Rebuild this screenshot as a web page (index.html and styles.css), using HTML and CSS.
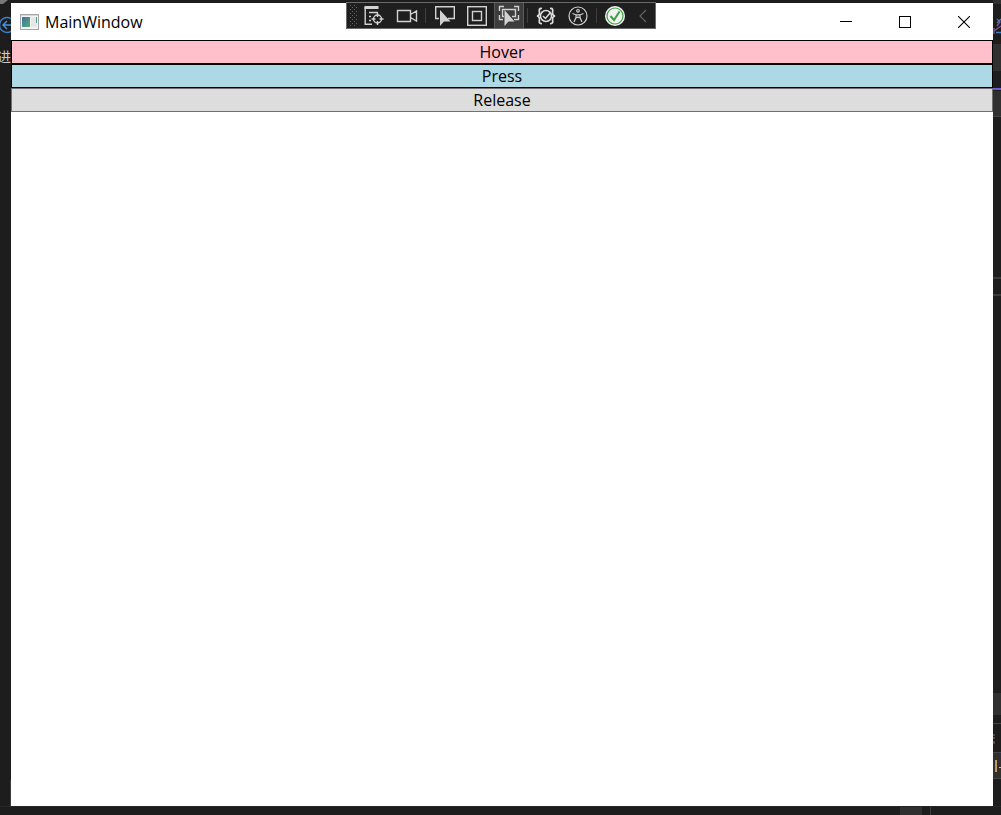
FILE: index.html
```html
<!DOCTYPE html>
<html lang="en">
<head>
<meta charset="utf-8">
<title>MainWindow</title>
<link rel="stylesheet" href="styles.css">
</head>
<body>
<div class="desktop">
  <div class="edge edge-left" aria-hidden="true">
    <svg width="11" height="815" viewBox="0 0 11 815" fill="none">
      <path d="M0 0H8L3 4H0Z" fill="#777"/>
      <circle cx="7" cy="25" r="7.5" stroke="#3f7fc4" stroke-width="1.4"/>
      <path d="M11 25H3M7 21L3 25L7 29" stroke="#4a94e0" stroke-width="1.4"/>
      <path d="M10.500 780V815" stroke="#3d3d3d"/>
    </svg>
    <span class="edge-text">进</span>
  </div>

  <main class="window">
    <header class="titlebar">
      <svg class="app-icon" width="19" height="16" viewBox="0 0 19 16">
        <defs><linearGradient id="pane" x1="0" y1="0" x2="1" y2="1"><stop offset="0" stop-color="#3f6fa5"/><stop offset="1" stop-color="#58ad72"/></linearGradient></defs>
        <rect x=".5" y=".5" width="18" height="15" fill="#f4f4f4" stroke="#a3a7aa"/>
        <path d="M1 1.500H18" stroke="#d5d8da"/>
        <rect x="2" y="3" width="8" height="10" fill="url(#pane)"/>
        <rect x="11" y="3" width="6" height="10" fill="#e4e6e8"/>
        <path d="M16.500 3V9" stroke="#55a184"/>
      </svg>
      <h1 class="title">MainWindow</h1>
      <div class="caption-buttons">
        <button class="caption" aria-label="Minimize"><svg width="12" height="12" viewBox="0 0 12 12"><path d="M0 5.500H12" stroke="#000"/></svg></button>
        <button class="caption" aria-label="Maximize"><svg width="12" height="12" viewBox="0 0 12 12"><rect x=".5" y=".5" width="11" height="11" fill="none" stroke="#000"/></svg></button>
        <button class="caption" aria-label="Close"><svg width="12" height="12" viewBox="0 0 12 12"><path d="M0 0L12 12M12 0L0 12" stroke="#000" stroke-width="1.100"/></svg></button>
      </div>
    </header>
    <div class="stack">
      <button class="bar bar-hover">Hover</button>
      <button class="bar bar-press">Press</button>
      <button class="bar bar-release">Release</button>
    </div>
  </main>

  <div class="edge edge-right" aria-hidden="true">
    <svg width="8" height="815" viewBox="0 0 8 815" fill="none">
      <path d="M0 0H8V4H0ZM0 44H8V71H0ZM0 91H8V116H0ZM0 693H8V715H0ZM0 752H8V779H0Z" fill="#303030"/>
      <path d="M0 116.500H8M0 278H8M0 295H8M0 723.500H8M0 752.500H8M0 778.500H8" stroke="#454545"/>
      <path d="M0 278H8M0 295H8" stroke="#3a3a3a" stroke-width="2"/>
      <path d="M0 89H8" stroke="#6d5bd0" stroke-width="2"/>
      <path d="M4 19L7 22L4 26M1 28V34M1 31L8 26" stroke="#8054a0" stroke-width="1.300"/>
      <path d="M4 23L8 19M3 32.500H8" stroke="#3884cc" stroke-width="1.300"/>
      <path d="M0 735H2M0 738H2M1 741V744" stroke="#a06a48"/>
      <path d="M2.500 760V772" stroke="#74a5cc"/><path d="M3.500 760V772" stroke="#c59b68"/>
      <path d="M6 767.500H8" stroke="#bbb"/>
    </svg>
  </div>

  <div class="taskstrip" aria-hidden="true"><span class="thumb"></span><span class="divider"></span></div>

  <nav class="toolbar" aria-label="Debug tools">
    <svg class="grip" width="11" height="25" viewBox="0 0 11 25">
      <defs><pattern id="dots" x="3" y="2" width="4" height="4" patternUnits="userSpaceOnUse"><path d="M0 0H1V1H0ZM2 2H3V3H2Z" fill="#666"/></pattern></defs>
      <rect x="3" y="2" width="7" height="21" fill="url(#dots)"/>
    </svg>
    <div class="group group-spaced">
      <button class="tool" aria-label="Go to live visual tree"><svg width="22" height="22" viewBox="0 0 22 22" fill="none" stroke="#d2d2d2" stroke-width="1.400">
        <path d="M1.500 2.500H15.500" stroke-width="3"/><path d="M2.200 2V19.300H9M6 7.500H15M6 11.500H8M6 15.500H8"/>
        <circle cx="14.500" cy="14" r="4"/><path d="M14.500 8V12M14.500 16V20M8.500 14H12.500M16.500 14H20.500"/>
      </svg></button>
      <button class="tool" aria-label="Record"><svg width="22" height="22" viewBox="0 0 22 22" fill="none" stroke="#d2d2d2" stroke-width="1.400">
        <path d="M1.500 5.500H14.500V16.500H1.500ZM14.500 9.500L20.500 6V16L14.500 12.500"/>
      </svg></button>
    </div>
    <span class="sep"></span>
    <div class="group group-select">
      <button class="tool" aria-label="Select element"><svg width="22" height="22" viewBox="0 0 22 22" fill="none">
        <path d="M5 13.500H1.700V1.700H20.300V13.500H14" stroke="#d2d2d2" stroke-width="1.400"/><path d="M6 5V21L10 16.500H16.500Z" fill="#d2d2d2"/>
      </svg></button>
      <button class="tool" aria-label="Display layout adorners"><svg width="22" height="22" viewBox="0 0 22 22" fill="none" stroke="#d2d2d2" stroke-width="1.400">
        <rect x="1.700" y="1.700" width="18.600" height="18.600"/><rect x="6.500" y="6.500" width="9" height="9"/>
      </svg></button>
      <button class="tool tool-active" aria-label="Track focused element" aria-pressed="true"><svg width="22" height="22" viewBox="0 0 22 22" fill="none" stroke="#d2d2d2" stroke-width="1.400">
        <path d="M1.500 6V1.500H6M16 1.500H20.500V6M1.500 10V14.500H5M20.500 10V14.500H16M6 11.500H4.500V4.500H17.500V11.500H14"/><path d="M6.500 5V21L10.500 16.500H16.500Z" fill="#d2d2d2" stroke="none"/>
      </svg></button>
    </div>
    <span class="sep"></span>
    <div class="group">
      <button class="tool" aria-label="Binding failures"><svg width="22" height="22" viewBox="0 0 22 22" fill="none" stroke="#dedede" stroke-width="1.700">
        <path d="M7 3.500C3 3 4.500 6 4.500 8Q4.500 10.500 2 11Q4.500 11.500 4.500 14C4.500 16 3 19 7 18.500M15 3.500C19 3 17.500 6 17.500 8Q17.500 10.500 20 11Q17.500 11.500 17.500 14C17.500 16 19 19 15 18.500"/><circle cx="11" cy="11" r="5.500" stroke-width="1.500"/><path d="M8 11L10.500 13.500L15 8" stroke-width="1.500"/>
      </svg></button>
      <button class="tool" aria-label="Scan for accessibility issues"><svg width="22" height="22" viewBox="0 0 22 22" fill="none" stroke="#d2d2d2" stroke-width="1.200">
        <circle cx="11" cy="11" r="9"/><circle cx="11" cy="5.800" r="1.300"/><path d="M5.500 8.500L9 9.800V12.500L7 17M16.500 8.500L13 9.800V12.500L15 17M9 9.800H13M9.500 13L11 12L12.500 13"/>
      </svg></button>
    </div>
    <span class="sep"></span>
    <button class="tool" aria-label="Hot Reload"><svg width="22" height="22" viewBox="0 0 22 22" fill="none">
      <circle cx="11" cy="11" r="10" fill="#f2f2f2"/><circle cx="11" cy="11" r="8" stroke="#3ba23f" stroke-width="1.200"/><path d="M6.500 11L10 15L15.500 6.500" stroke="#3ba23f" stroke-width="2"/>
    </svg></button>
    <button class="tool tool-collapse" aria-label="Collapse toolbar"><svg width="8" height="14" viewBox="0 0 8 14"><path d="M7 1L1 7L7 13" fill="none" stroke="#626262" stroke-width="1.200"/></svg></button>
  </nav>
</div>
</body>
</html>
```
FILE: styles.css
```css
* {
  box-sizing: border-box;
}

body {
  margin: 0;
  background: #1d1d1d;
  color: #000;
  font: 16px/22px "Open Sans", "Noto Sans", "Noto Sans CJK SC", sans-serif;
}

button {
  padding: 0;
  border: 0;
  background: transparent;
  color: inherit;
  font: inherit;
}

svg {
  display: block;
  flex: none;
}

.desktop {
  position: relative;
  display: grid;
  grid-template-columns: 11px 1fr 8px;
  grid-template-rows: 1fr 9px;
  height: 100vh;
  padding-top: 3px;
  overflow: hidden;
}

.edge {
  position: relative;
  overflow: hidden;
  margin-top: -3px;
  min-height: 0;
}

.edge-text {
  position: absolute;
  top: 46px;
  right: 0;
  color: #c8c8c8;
  font-size: 14px;
}

.window {
  display: flex;
  flex-direction: column;
  min-height: 0;
  background: #fff;
}

.titlebar {
  display: flex;
  align-items: center;
  height: 37px;
  padding-left: 9px;
}

.title {
  margin: 0 0 0 6px;
  font-size: 16px;
  font-weight: 400;
}

.caption-buttons {
  display: flex;
  align-self: stretch;
  margin-left: auto;
}

.caption {
  display: flex;
  align-items: center;
  justify-content: center;
  width: 59px;
}

.stack {
  display: flex;
  flex-direction: column;
}

.bar {
  height: 24px;
  border: 1px solid #000;
}

.bar-hover {
  background: #ffc0cb;
}

.bar-press {
  background: #add8e6;
}

.bar-release {
  border-color: #707070;
  background: #ddd;
}

.taskstrip {
  grid-column: 1 / -1;
  display: flex;
  justify-content: flex-end;
  gap: 8px;
  padding-right: 70px;
  border-top: 1px solid #262626;
}

.thumb {
  width: 22px;
  background: #303030;
}

.divider {
  width: 1px;
  background: #3d3d3d;
}

.toolbar {
  position: absolute;
  top: 2px;
  left: 50%;
  display: flex;
  height: 27px;
  border: 1px solid #6a6a6a;
  background: #1f1f1f;
  transform: translateX(-50%);
}

.group {
  display: flex;
}

.group-spaced {
  gap: 1px;
}

.group-select {
  padding-left: 1px;
}

.tool {
  display: flex;
  align-items: center;
  justify-content: center;
  width: 32px;
}

.tool-active {
  margin: 0 1px;
  width: 30px;
  border: solid #5a5a5a;
  border-width: 0 1px;
  background: #3d3d3d;
}

.tool-collapse {
  width: 24px;
}

.sep {
  width: 1px;
  margin: 5px 2px;
  background: #3f3f3f;
}
```
